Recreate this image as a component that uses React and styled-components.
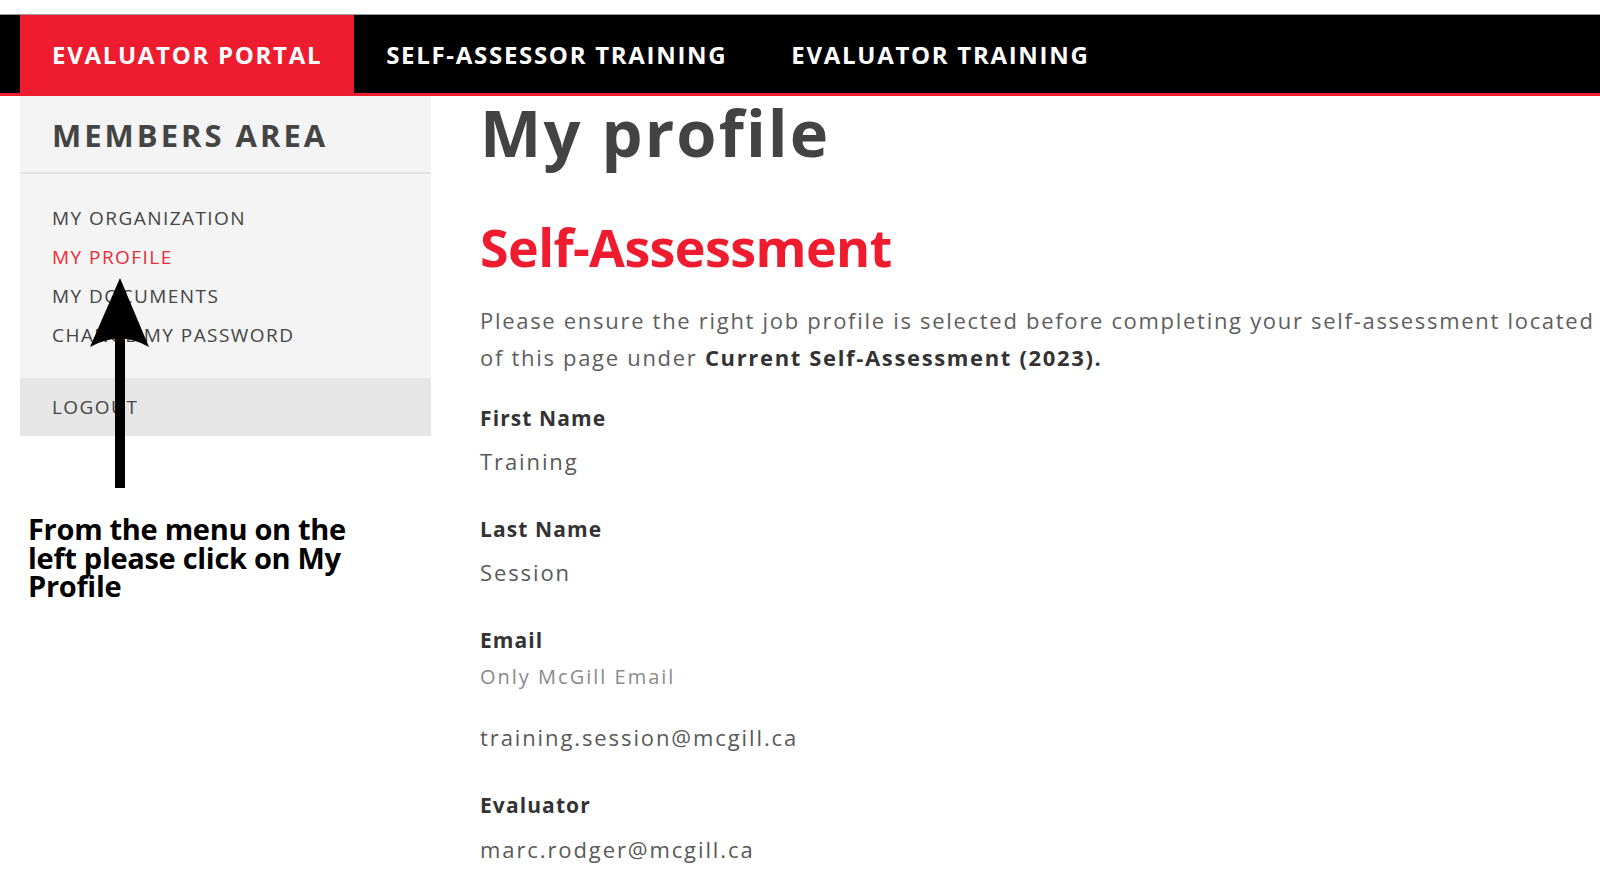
import React from "react";
import styled, { createGlobalStyle } from "styled-components";

const GlobalStyle = createGlobalStyle`
  html, body {
    margin: 0;
    padding: 0;
    background: #ffffff;
    overflow-x: hidden;
  }
  body {
    font-family: "Open Sans", "Liberation Sans", sans-serif;
    color: #444;
  }
  * { box-sizing: border-box; }
`;

const Page = styled.div`
  position: relative;
  width: 1600px;
  min-height: 895px;
  padding-top: 14px;
  overflow: hidden;
`;

const NavBar = styled.nav`
  display: flex;
  align-items: stretch;
  height: 82px;
  padding-left: 20px;
  background: #000;
  border-top: 1px solid #9a9a9a;
  border-bottom: 3px solid #ee1c2e;
`;

const NavItem = styled.a`
  display: flex;
  align-items: center;
  padding: 0 32px;
  background: ${(p) => (p.$active ? "#ee1c2e" : "transparent")};
  color: #fff;
  font-family: "Open Sans", sans-serif;
  font-weight: 700;
  font-size: 24px;
  letter-spacing: 1.7px;
  text-decoration: none;
  white-space: nowrap;
`;

const Body = styled.div`
  display: flex;
  align-items: flex-start;
  padding-left: 20px;
`;

const LeftColumn = styled.div`
  width: 411px;
  flex: none;
`;

const Sidebar = styled.aside`
  background: #f4f4f4;
`;

const SidebarHeader = styled.div`
  height: 78px;
  padding-left: 32px;
  display: flex;
  align-items: center;
  border-bottom: 2px solid #e2e2e2;
  font-weight: 700;
  font-size: 31px;
  letter-spacing: 3px;
  color: #444;
  padding-top: 2px;
`;

const Menu = styled.ul`
  list-style: none;
  margin: 0;
  padding: 25px 0 23px 32px;
`;

const MenuItem = styled.li`
  height: 39px;
  line-height: 39px;
  font-size: 19px;
  letter-spacing: 1.45px;
  color: ${(p) => (p.$active ? "#ee2a38" : "#444")};
`;

const Logout = styled.div`
  height: 58px;
  line-height: 58px;
  padding-left: 32px;
  background: #e6e6e6;
  font-size: 19px;
  letter-spacing: 1.45px;
  color: #444;
`;

const Note = styled.p`
  margin: 79px 0 0 8px;
  width: 350px;
  font-family: "Open Sans", sans-serif;
  font-weight: 700;
  font-size: 29px;
  line-height: 28.5px;
  letter-spacing: -0.3px;
  color: #000;
`;

const Main = styled.main`
  margin-left: 49px;
  flex: 1;
  min-width: 0;
`;

const Title = styled.h1`
  margin: 0;
  font-size: 65px;
  font-weight: 700;
  line-height: 72px;
  letter-spacing: 2.1px;
  color: #434343;
`;

const SectionTitle = styled.h2`
  margin: 49px 0 0;
  font-size: 52px;
  font-weight: 700;
  line-height: 60px;
  letter-spacing: -0.6px;
  color: #ee1c2e;
`;

const Intro = styled.p`
  margin: 25px 0 0;
  width: 1125px;
  font-size: 22px;
  line-height: 37px;
  letter-spacing: 1.7px;
  color: #5e5e5e;

  strong {
    color: #333;
    font-weight: 700;
    letter-spacing: 1.65px;
  }
`;

const Fields = styled.div`
  margin-top: 27px;
  display: flex;
  flex-direction: column;
  gap: 38px;
`;

const Field = styled.div`
  display: flex;
  flex-direction: column;
`;

const Label = styled.div`
  font-size: 21px;
  font-weight: 700;
  line-height: 30px;
  letter-spacing: 1.1px;
  color: #333;
`;

const Hint = styled.div`
  margin-top: 7px;
  font-size: 20px;
  line-height: 30px;
  letter-spacing: 2px;
  color: #8a8a8a;
`;

const Value = styled.div`
  margin-top: ${(p) => p.$gap}px;
  font-size: 22px;
  line-height: 30px;
  letter-spacing: 1.9px;
  color: #595959;
`;

const ArrowOverlay = styled.svg`
  position: absolute;
  left: 88px;
  top: 276px;
  width: 64px;
  height: 214px;
  pointer-events: none;
`;

const fields = [
  { label: "First Name", value: "Training", gap: 13 },
  { label: "Last Name", value: "Session", gap: 13 },
  { label: "Email", hint: "Only McGill Email", value: "training.session@mcgill.ca", gap: 30 },
  { label: "Evaluator", value: "marc.rodger@mcgill.ca", gap: 14 },
];

export default function App() {
  return (
    <>
      <GlobalStyle />
      <Page>
        <NavBar>
          <NavItem $active>EVALUATOR PORTAL</NavItem>
          <NavItem>SELF-ASSESSOR TRAINING</NavItem>
          <NavItem>EVALUATOR TRAINING</NavItem>
        </NavBar>
        <Body>
          <LeftColumn>
            <Sidebar>
              <SidebarHeader>MEMBERS AREA</SidebarHeader>
              <Menu>
                <MenuItem>MY ORGANIZATION</MenuItem>
                <MenuItem $active>MY PROFILE</MenuItem>
                <MenuItem>MY DOCUMENTS</MenuItem>
                <MenuItem>CHANGE MY PASSWORD</MenuItem>
              </Menu>
              <Logout>LOGOUT</Logout>
            </Sidebar>
            <Note>From the menu on the left please click on My Profile</Note>
          </LeftColumn>
          <Main>
            <Title>My profile</Title>
            <SectionTitle>Self-Assessment</SectionTitle>
            <Intro>
              Please ensure the right job profile is selected before completing your
              self-assessment located of this page under{" "}
              <strong>Current Self-Assessment (2023).</strong>
            </Intro>
            <Fields>
              {fields.map((f) => (
                <Field key={f.label}>
                  <Label>{f.label}</Label>
                  {f.hint && <Hint>{f.hint}</Hint>}
                  <Value $gap={f.gap}>{f.value}</Value>
                </Field>
              ))}
            </Fields>
          </Main>
        </Body>
        <ArrowOverlay viewBox="0 0 64 214">
          <path d="M32 2 L61 71 Q32 54 2 71 Z" fill="#000" />
          <rect x="27" y="58" width="10" height="154" fill="#000" />
        </ArrowOverlay>
      </Page>
    </>
  );
}
